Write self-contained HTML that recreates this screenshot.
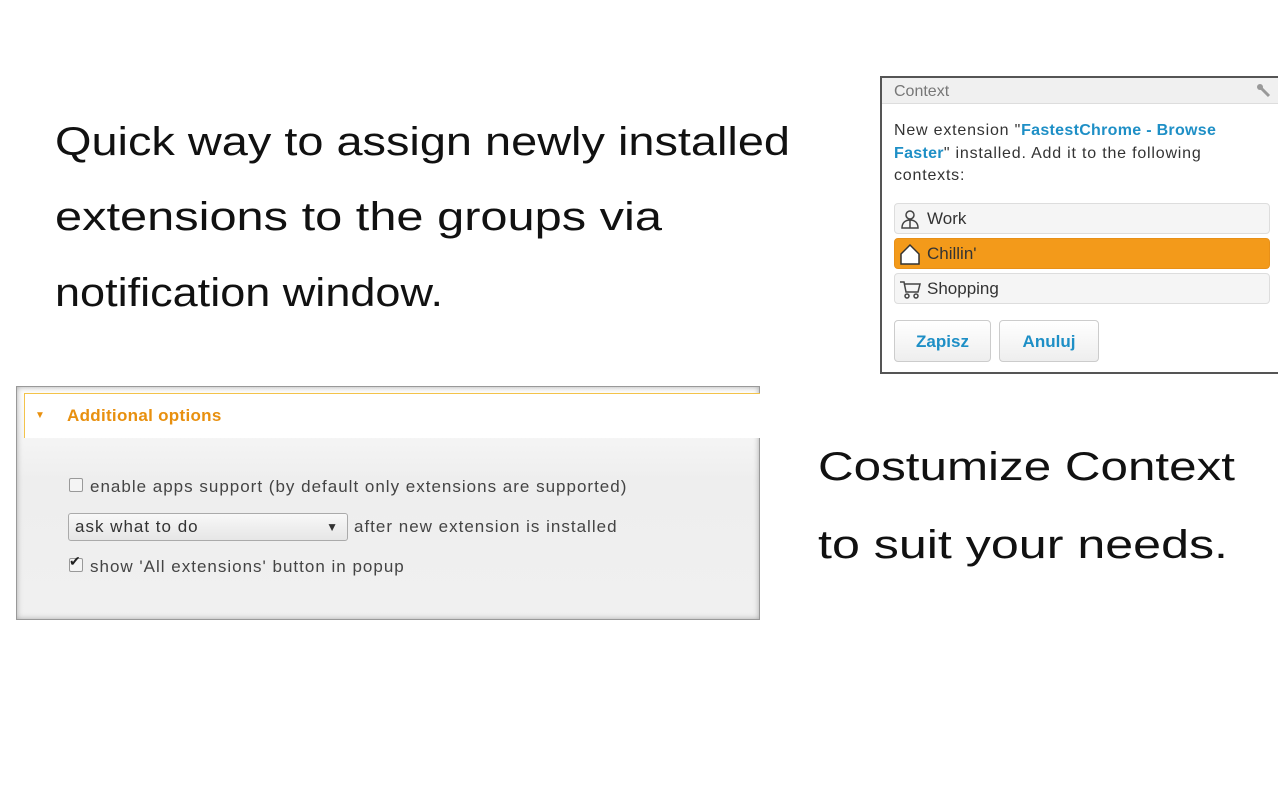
<!DOCTYPE html>
<html><head><style>
body{margin:0;width:1280px;height:800px;background:#fff;position:relative;overflow:hidden;font-family:"Liberation Sans",sans-serif}
.abs{position:absolute}
svg.hand{position:absolute;left:0;top:0}
.pop{left:880px;top:76px;width:396px;height:294px;border:2px solid #555;border-right:none;background:#fff}
.tb{left:0;top:0;width:396px;height:26px;background:#f0f0f0;border-bottom:1px solid #ddd;color:#777;font-size:16px;line-height:28px;padding-left:12px;box-sizing:border-box}
.msg{left:12px;top:42px;width:352px;font-size:16px;line-height:22.5px;color:#333;letter-spacing:0.8px}
.msg b{color:#1e8fc6;letter-spacing:0.3px}
.item{left:12px;width:376px;height:31px;border:1px solid #ddd;border-radius:4px;background:#f5f5f5;font-size:17px;color:#333;line-height:30px;box-sizing:border-box;padding-left:32px}
.btn{top:242px;height:42px;border:1px solid #ccc;border-radius:4px;background:linear-gradient(#fff,#eee);color:#1e8fc6;font-weight:bold;font-size:17px;text-align:center;line-height:42px;box-sizing:border-box}
.opt{left:16px;top:386px;width:744px;height:234px;border:1px solid #999;box-shadow:inset 0 0 6px #aaa;background:linear-gradient(#fdfdfd,#eee 40%,#f0f0f0);box-sizing:border-box}
.oh{left:7px;top:6px;width:736px;height:45px;background:#fff;border-top:1px solid #f3c34a;border-left:1px solid #f3c34a;color:#e8900f;font-weight:bold;font-size:17px;line-height:44px;padding-left:42px;box-sizing:border-box;letter-spacing:0.3px}
.ot{font-size:17px;color:#444;letter-spacing:1px}
.cb{width:12px;height:12px;border:1px solid #999;border-radius:2px;background:#f4f4f4}
</style></head><body>
<svg class="hand" width="1280" height="800" font-family="Liberation Sans, sans-serif" font-size="40" fill="#111">
<text x="55" y="155" textLength="735" lengthAdjust="spacingAndGlyphs">Quick way to assign newly installed</text>
<text x="55" y="230" textLength="607" lengthAdjust="spacingAndGlyphs">extensions to the groups via</text>
<text x="55" y="306" textLength="388" lengthAdjust="spacingAndGlyphs">notification window.</text>
<text x="818" y="480" textLength="417" lengthAdjust="spacingAndGlyphs">Costumize Context</text>
<text x="818" y="558" textLength="410" lengthAdjust="spacingAndGlyphs">to suit your needs.</text>
</svg>
<div class="abs pop">
<div class="abs tb">Context<svg class="abs" style="right:6px;top:5px" width="16" height="16"><path d="M3 3l10 10" stroke="#999" stroke-width="3"/><circle cx="4" cy="4" r="3" fill="#999"/></svg></div>
<div class="abs msg">New extension "<b>FastestChrome - Browse Faster</b>" installed. Add it to the following contexts:</div>
<div class="abs item" style="top:125px"><svg class="abs" style="left:5px;top:5px" width="20" height="20" fill="none" stroke="#444" stroke-width="1.5"><circle cx="10" cy="6" r="4"/><path d="M2 19c0-5 3-8 8-8s8 3 8 8z M10 11v8"/></svg>Work</div>
<div class="abs item" style="top:160px;background:#f39a1a;border-color:#e89018"><svg class="abs" style="left:4px;top:4px" width="22" height="22" fill="#fff" stroke="#333" stroke-width="1.5"><path d="M2 11L11 2l9 9v10H2z"/></svg>Chillin'</div>
<div class="abs item" style="top:195px"><svg class="abs" style="left:4px;top:5px" width="22" height="20" fill="none" stroke="#444" stroke-width="1.5"><path d="M1 3h4l2 10h12l2-8H6"/><circle cx="8" cy="17" r="2"/><circle cx="17" cy="17" r="2"/></svg>Shopping</div>
<div class="abs btn" style="left:12px;width:97px">Zapisz</div>
<div class="abs btn" style="left:117px;width:100px">Anuluj</div>
</div>
<div class="abs opt">
<div class="abs oh"><span style="position:absolute;left:10px;top:0;font-size:10px">▼</span>Additional options</div>
<div class="abs cb" style="left:52px;top:91px"></div>
<div class="abs ot" style="left:73px;top:90px">enable apps support (by default only extensions are supported)</div>
<div class="abs" style="left:51px;top:126px;width:280px;height:28px;border:1px solid #aaa;border-radius:3px;background:linear-gradient(#f8f8f8,#e6e6e6);box-sizing:border-box;font-size:17px;color:#333;line-height:26px;padding-left:6px;letter-spacing:1px">ask what to do<span style="position:absolute;right:8px;font-size:12px">▼</span></div>
<div class="abs ot" style="left:337px;top:130px">after new extension is installed</div>
<div class="abs cb" style="left:52px;top:171px"></div><div class="abs" style="left:52px;top:166px;font-size:14px;color:#222">✔</div>
<div class="abs ot" style="left:73px;top:170px">show 'All extensions' button in popup</div>
</div>
</body></html>
